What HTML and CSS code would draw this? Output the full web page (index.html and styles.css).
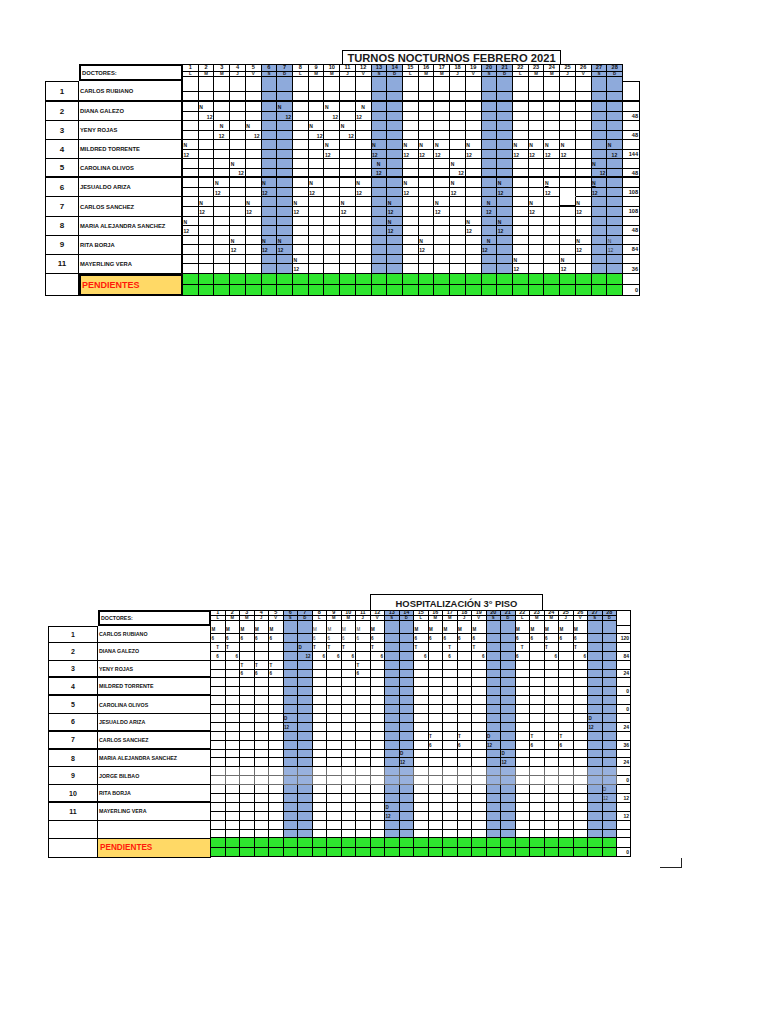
FILE: index.html
```html
<!DOCTYPE html>
<html lang="es">
<head>
<meta charset="utf-8">
<title>Turnos</title>
<link rel="stylesheet" href="styles.css">
</head>
<body>
<section class="sheet sheet-top">
  <div class="title title-top">TURNOS NOCTURNOS FEBRERO 2021</div>
  <div class="table">
    <div class="left left-top">
      <div class="corner"></div>
      <div class="doc-head">DOCTORES:</div>
      <div class="num first thick">1</div><div class="name thick">CARLOS RUBIANO</div>
      <div class="num">2</div><div class="name">DIANA GALEZO</div>
      <div class="num">3</div><div class="name">YENY ROJAS</div>
      <div class="num">4</div><div class="name">MILDRED TORRENTE</div>
      <div class="num thick">5</div><div class="name thick">CAROLINA OLIVOS</div>
      <div class="num">6</div><div class="name">JESUALDO ARIZA</div>
      <div class="num">7</div><div class="name">CARLOS SANCHEZ</div>
      <div class="num">8</div><div class="name">MARIA ALEJANDRA SANCHEZ</div>
      <div class="num">9</div><div class="name">RITA BORJA</div>
      <div class="num">11</div><div class="name">MAYERLING VERA</div>
      <div class="num"></div><div class="name pend">PENDIENTES</div>
    </div>
    <div class="days days-top" id="days-top"></div>
    <div class="totals totals-top">
      <div class="tc blank"></div>
      <div class="tc first thk"></div>
      <div class="tc"></div><div class="tc">48</div>
      <div class="tc"></div><div class="tc">48</div>
      <div class="tc"></div><div class="tc">144</div>
      <div class="tc"></div><div class="tc thk">48</div>
      <div class="tc"></div><div class="tc">108</div>
      <div class="tc"></div><div class="tc">108</div>
      <div class="tc"></div><div class="tc">48</div>
      <div class="tc"></div><div class="tc">84</div>
      <div class="tc"></div><div class="tc">36</div>
      <div class="tc"></div><div class="tc">0</div>
    </div>
  </div>
</section>

<section class="sheet sheet-bottom">
  <div class="title title-bottom">HOSPITALIZACIÓN 3° PISO</div>
  <div class="table">
    <div class="left left-bottom">
      <div class="corner"></div>
      <div class="doc-head">DOCTORES:</div>
      <div class="num first">1</div><div class="name">CARLOS RUBIANO</div>
      <div class="num">2</div><div class="name">DIANA GALEZO</div>
      <div class="num thick">3</div><div class="name thick">YENY ROJAS</div>
      <div class="num thick">4</div><div class="name thick">MILDRED TORRENTE</div>
      <div class="num">5</div><div class="name">CAROLINA OLIVOS</div>
      <div class="num thick">6</div><div class="name thick">JESUALDO ARIZA</div>
      <div class="num thick">7</div><div class="name thick">CARLOS SANCHEZ</div>
      <div class="num">8</div><div class="name">MARIA ALEJANDRA SANCHEZ</div>
      <div class="num">9</div><div class="name">JORGE BILBAO</div>
      <div class="num thick">10</div><div class="name thick">RITA BORJA</div>
      <div class="num">11</div><div class="name">MAYERLING VERA</div>
      <div class="num"></div><div class="name"></div>
      <div class="num"></div><div class="name pend">PENDIENTES</div>
    </div>
    <div class="days days-bottom" id="days-bottom"></div>
    <div class="totals totals-bottom">
      <div class="tc first"></div>
      <div class="tc"></div><div class="tc">120</div>
      <div class="tc"></div><div class="tc">84</div>
      <div class="tc"></div><div class="tc">24</div>
      <div class="tc"></div><div class="tc">0</div>
      <div class="tc"></div><div class="tc">0</div>
      <div class="tc"></div><div class="tc">24</div>
      <div class="tc"></div><div class="tc">36</div>
      <div class="tc"></div><div class="tc">24</div>
      <div class="tc"></div><div class="tc">0</div>
      <div class="tc"></div><div class="tc">12</div>
      <div class="tc"></div><div class="tc">12</div>
      <div class="tc"></div><div class="tc"></div>
      <div class="tc"></div><div class="tc">0</div>
    </div>
  </div>
</section>

<div class="corner-mark"></div>

<script src="script.js"></script>
</body>
</html>
```

FILE: styles.css
```css
* { box-sizing: border-box; }

body {
  margin: 0;
  background: #ffffff;
  font-family: "Liberation Sans", Arial, sans-serif;
  color: #111111;
}

.sheet-top { padding: 50px 0 0 45px; }
.sheet-bottom { padding: 298px 0 0 48px; }

.title {
  border: 1px solid #000000;
  border-bottom: none;
  font-weight: bold;
  text-align: center;
  white-space: nowrap;
  color: #1a1a1a;
}
.title-top {
  margin-left: 297px;
  width: 219px;
  height: 14px;
  font-size: 11.2px;
  line-height: 15px;
}
.title-bottom {
  margin-left: 322px;
  width: 173px;
  height: 16px;
  font-size: 9.4px;
  line-height: 17px;
}

.table {
  display: flex;
  align-items: flex-start;
}

/* left block: numbers and names */
.left { display: grid; }
.left-top {
  grid-template-columns: 34px 104px;
  grid-template-rows: 17px 21px repeat(9, 19.1px) 22px;
}
.left-bottom {
  grid-template-columns: 50px 113px;
  grid-template-rows: 16px 17px repeat(11, 17.8px) 19px;
}

.doc-head {
  border: 2px solid #000000;
  font-weight: bold;
  display: flex;
  align-items: center;
  padding-left: 1px;
  white-space: nowrap;
}
.left-top .doc-head { font-size: 5.8px; }
.left-bottom .doc-head { font-size: 5.3px; }

.num {
  border-left: 1px solid #000000;
  border-right: 1px solid #000000;
  border-bottom: 1px solid #000000;
  display: flex;
  align-items: center;
  justify-content: center;
  font-weight: bold;
}
.num.first { border-top: 1px solid #000000; }
.left-top .num { font-size: 8px; }
.left-bottom .num { font-size: 7px; }

.name {
  border-bottom: 1px solid #000000;
  display: flex;
  align-items: center;
  padding-left: 1px;
  font-weight: bold;
  white-space: nowrap;
}
.left-top .name { border-right: 2px solid #000000; font-size: 5.8px; }
.left-bottom .name { border-right: 1px solid #000000; font-size: 5.3px; }

.left .thick { border-bottom: 2px solid #000000; }

.name.pend {
  background: #ffd966;
  color: #ff1a0a;
  font-weight: bold;
}
.left-top .name.pend { border: 2px solid #000000; font-size: 9px; }
.left-bottom .name.pend { font-size: 8.2px; padding-left: 2px; }

/* day grid */
.days { display: grid; }
.days-top {
  width: 440px;
  grid-template-columns: repeat(28, 1fr);
  grid-template-rows: 8px 5px 14.7px 10.3px repeat(18, 9.55px) 11px 11px;
}
.days-bottom {
  width: 406px;
  grid-template-columns: repeat(28, 1fr);
  grid-template-rows: 6.5px 5px 13px 8.5px repeat(22, 8.9px) 9.5px 9.5px;
}

.dc {
  border-right: 1px solid #000000;
  border-bottom: 1px solid #000000;
  display: flex;
  align-items: flex-end;
  justify-content: flex-start;
  line-height: 1;
  font-weight: bold;
  white-space: nowrap;
  padding: 0 1px 0.5px 0.5px;
}
.days-top .dc { font-size: 5px; }
.days-bottom .dc { font-size: 4.5px; }

.dc.hd {
  align-items: center;
  justify-content: center;
  padding: 0;
}
.dc.h1 { border-top: 1px solid #000000; }
.days-top .dc.h1 { font-size: 5.6px; }
.days-top .dc.h2 { font-size: 4.4px; }
.days-bottom .dc.h1 { font-size: 5.4px; }
.days-bottom .dc.h2 { font-size: 4.2px; }

.dc.c { justify-content: center; }
.dc.r { justify-content: flex-end; }
.dc.l { justify-content: flex-start; }
.dc.lt { font-weight: normal; color: #3a3a3a; }
.dc.u span { text-decoration: underline; }

.wk { background: #8eaadb; }
.gr { background: #2ee52e; }
.dc.thk { border-bottom: 2px solid #000000; }
.dc.nb { border-bottom-color: transparent; }
.dc.fd { border-color: #6f6f6f; }
.dc.fd.wk { background: #98b1de; }

/* totals column */
.totals { display: grid; }
.totals-top {
  width: 17px;
  grid-template-rows: 17px 21px repeat(18, 9.55px) 11px 11px;
}
.totals-bottom {
  width: 14px;
  grid-template-rows: 16px 8.5px 8.5px repeat(22, 8.9px) 9.5px 9.5px;
}
.tc {
  border-right: 1px solid #000000;
  border-bottom: 1px solid #000000;
  font-weight: bold;
  display: flex;
  align-items: center;
  justify-content: flex-end;
  padding-right: 1px;
  white-space: nowrap;
}
.totals-top .tc { font-size: 5.6px; }
.totals-bottom .tc { font-size: 5px; }
.tc.blank { border: none; }
.tc.first { border-top: 1px solid #000000; }
.tc.thk { border-bottom: 2px solid #000000; }

.corner-mark {
  margin-left: 660px;
  width: 22px;
  height: 10px;
  border-right: 1.5px solid #222222;
  border-bottom: 1.5px solid #222222;
}
```

FILE: script.js
```js
(function () {
  var LETTERS = ['L', 'M', 'M', 'J', 'V', 'S', 'D'];
  function isWeekend(d) { var w = (d - 1) % 7; return w === 5 || w === 6; }

  function cell(parent, cls, text) {
    var c = document.createElement('div');
    c.className = cls;
    if (text) {
      var s = document.createElement('span');
      s.textContent = text;
      c.appendChild(s);
    }
    parent.appendChild(c);
  }

  function expand(spec) {
    var m = {};
    (spec || []).forEach(function (pair) {
      pair[0].forEach(function (d) { m[d] = pair[1]; });
    });
    return m;
  }

  function buildDays(id, rows) {
    var el = document.getElementById(id);
    var d, sub;
    for (d = 1; d <= 28; d++) cell(el, 'dc hd h1' + (isWeekend(d) ? ' wk' : ''), String(d));
    for (d = 1; d <= 28; d++) cell(el, 'dc hd h2' + (isWeekend(d) ? ' wk' : ''), LETTERS[(d - 1) % 7]);
    rows.forEach(function (r) {
      var m = expand(r.e);
      for (sub = 0; sub < 2; sub++) {
        for (d = 1; d <= 28; d++) {
          var cls = 'dc' + (isWeekend(d) ? ' wk' : '');
          if (sub === 1 && r.thick) cls += ' thk';
          if (r.faded) cls += ' fd';
          (r.x || []).forEach(function (x) {
            if (x[0] === sub && x[1] === d) cls += ' ' + x[2];
          });
          var e = m[d], t = '';
          if (e) {
            t = sub === 0 ? e[0] : e[2];
            cls += ' ' + (sub === 0 ? e[1] : e[3]);
            if (e[4]) cls += ' ' + e[4];
          }
          cell(el, cls, t);
        }
      }
    });
    for (sub = 0; sub < 2; sub++) for (d = 1; d <= 28; d++) cell(el, 'dc gr', '');
  }

  var NL = ['N', 'l', '12', 'l'];
  var NR = ['N', 'l', '12', 'r'];

  buildDays('days-top', [
    { thick: true },
    { e: [[[2, 7, 10], NR], [[12], ['N', 'c', '12', 'l']]] },
    { e: [[[3], ['N', 'c', '12', 'c']], [[5, 9, 11], NR]] },
    { e: [[[1, 10, 13, 15, 16, 17, 19, 22, 23, 24, 25], NL], [[28], ['N', 'l', '12', 'c']]] },
    { thick: true, e: [[[4, 18, 27], NR], [[13], ['N', 'c', '12', 'c']]] },
    { x: [[1, 25, 'nb']], e: [[[3, 6, 9, 12, 15, 18, 21], NL], [[24, 27], ['N', 'l', '12', 'l', 'u']]] },
    { x: [[0, 25, 'thk']], e: [[[2, 5, 8, 11, 14, 17, 23, 26], NL], [[20], ['N', 'c', '12', 'c']]] },
    { e: [[[1, 14, 19, 21], NL]] },
    { e: [[[4, 6, 7, 16, 26], NL], [[20], ['N', 'c', '12', 'l']], [[28], ['N', 'l', '12', 'l', 'lt']]] },
    { e: [[[8, 22, 25], NL]] }
  ]);

  var M6 = ['M', 'l', '6', 'l'];
  var T6 = ['T', 'l', '6', 'l'];
  var TR = ['T', 'l', '6', 'r'];
  var D12 = ['D', 'l', '12', 'l'];

  buildDays('days-bottom', [
    { e: [[[1, 2, 3, 4, 5, 12, 15, 16, 17, 18, 19, 22, 23, 24, 25, 26], M6], [[8, 9, 10, 11], ['M', 'l', '6', 'l', 'lt']]] },
    { e: [[[1, 17], ['T', 'c', '6', 'c']], [[2, 8, 9, 10, 12, 15, 19, 24, 26], TR], [[7], ['D', 'l', '12', 'r']], [[22], ['T', 'c', '6', 'l']]] },
    { e: [[[3, 4, 5, 11], T6]] },
    {},
    {},
    { e: [[[6, 27], D12]] },
    { e: [[[16, 18, 23, 25], T6], [[20], D12]] },
    { e: [[[14, 21], D12]] },
    { faded: true },
    { e: [[[28], ['D', 'l', '12', 'l', 'lt']]] },
    { e: [[[13], D12]] },
    {}
  ]);
})();
```
